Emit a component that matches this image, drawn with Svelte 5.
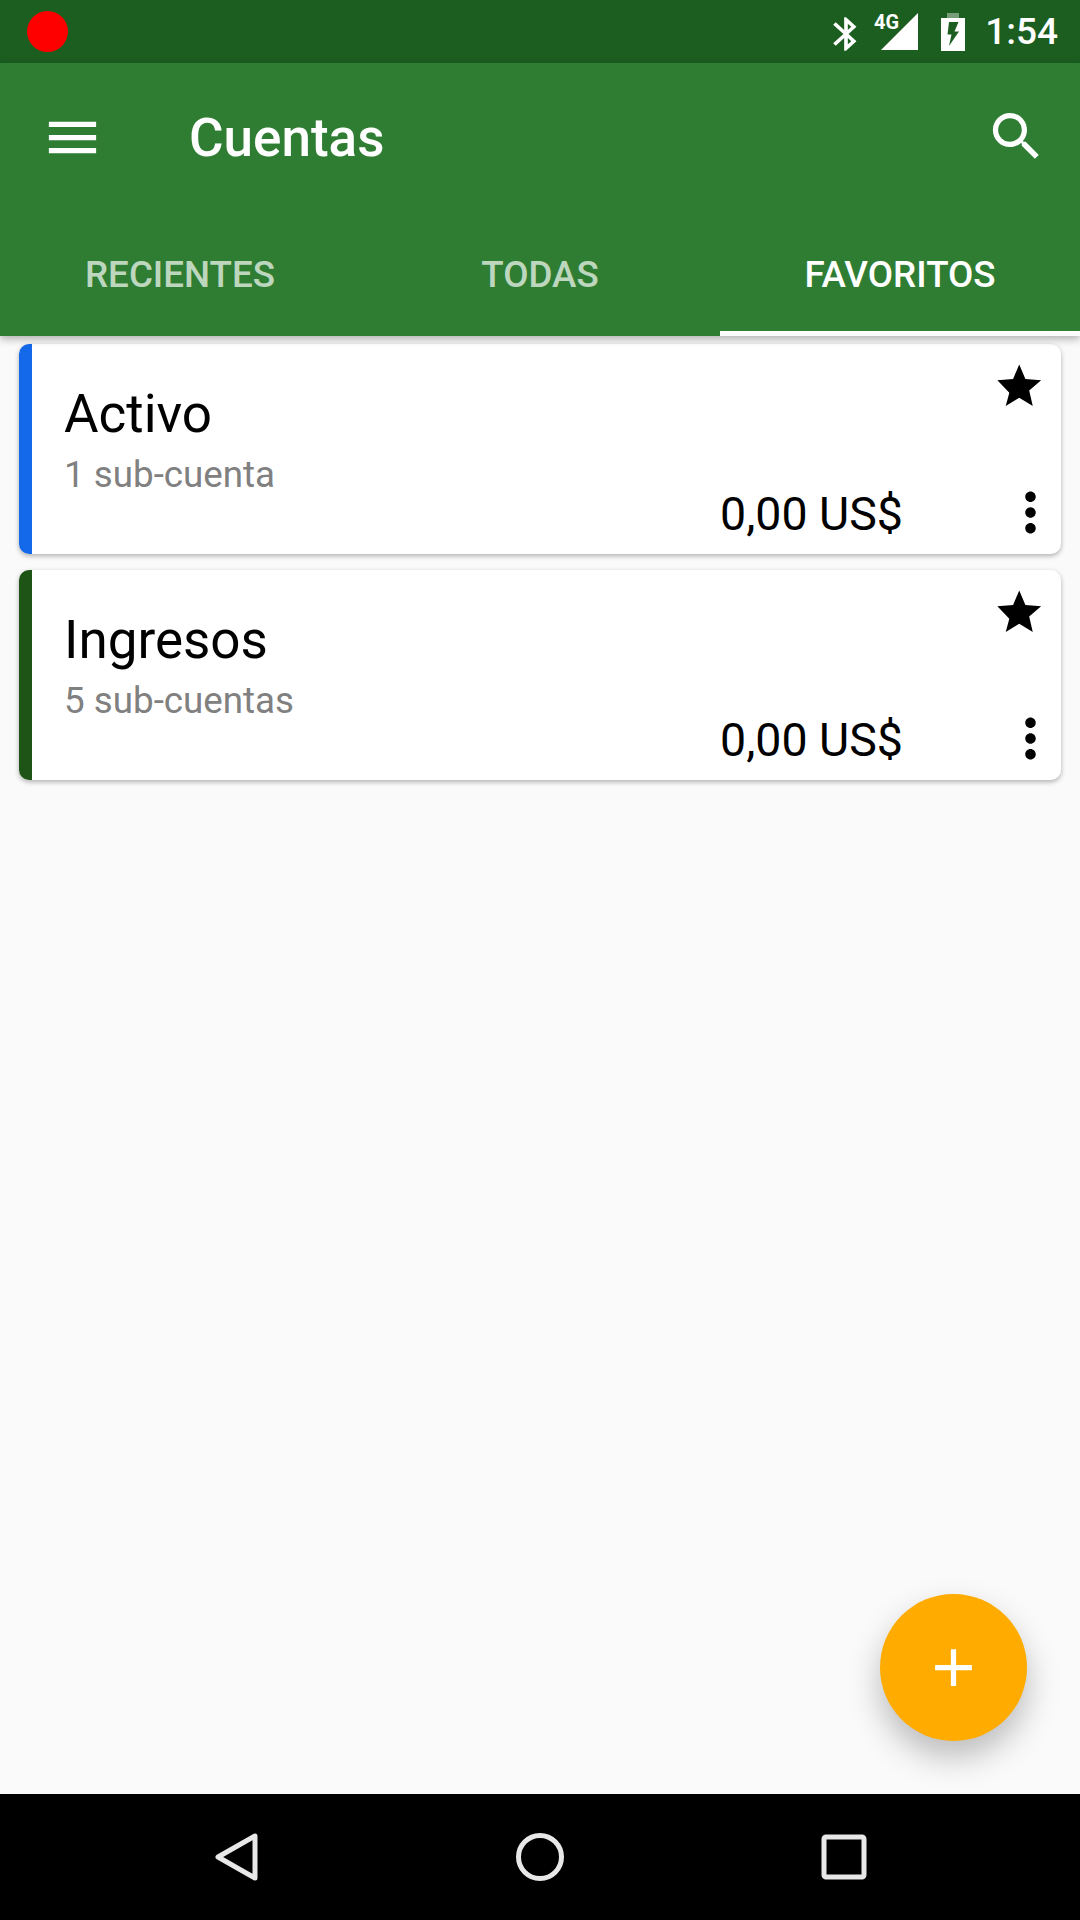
<script>
	const tabs = [
		{ label: 'RECIENTES', active: false },
		{ label: 'TODAS', active: false },
		{ label: 'FAVORITOS', active: true }
	];

	const accounts = [
		{ name: 'Activo', sub: '1 sub-cuenta', amount: '0,00 US$', color: 'blue' },
		{ name: 'Ingresos', sub: '5 sub-cuentas', amount: '0,00 US$', color: 'green' }
	];
</script>

<div class="screen">
	<div class="status">
		<span class="rec"></span>
		<div class="status-icons">
			<svg class="bt" viewBox="0 0 24 24" preserveAspectRatio="none">
				<path d="M17.71 7.71L12 2h-1v7.59L6.41 5 5 6.41 10.59 12 5 17.59 6.41 19 11 14.41V22h1l5.71-5.71-4.3-4.29 4.3-4.29zM13 5.83l1.88 1.88L13 9.59V5.83zm1.88 10.46L13 18.17v-3.76l1.88 1.88z" />
			</svg>
			<div class="signal">
				<span class="net">4G</span>
				<svg viewBox="0 0 37 37"><path d="M0 37L37 0v37z" /></svg>
			</div>
			<svg class="battery" viewBox="0 0 24 38">
				<path class="nub" d="M6 0h12v5H6z" />
				<path fill-rule="evenodd" d="M0 5h24v33H0zM8 9h9.500l-4 9.500h4.500L8 33l2.500-11.500H6.500z" />
			</svg>
			<span class="time">1:54</span>
		</div>
	</div>

	<header class="appbar">
		<div class="toolbar">
			<svg class="menu" viewBox="0 0 24 24"><path d="M3 18h18v-2H3v2zm0-5h18v-2H3v2zm0-7v2h18V6H3z" /></svg>
			<h1>Cuentas</h1>
			<svg class="search" viewBox="0 0 24 24">
				<path d="M15.5 14h-.79l-.28-.27C15.410 12.590 16 11.110 16 9.500 16 5.910 13.090 3 9.500 3S3 5.910 3 9.500 5.910 16 9.500 16c1.610 0 3.090-.59 4.230-1.570l.27.28v.79l5 4.990L20.490 19l-4.990-5zm-6 0C7.010 14 5 11.990 5 9.500S7.010 5 9.500 5 14 7.010 14 9.500 11.990 14 9.500 14z" />
			</svg>
		</div>
		<nav class="tabs">
			{#each tabs as tab}
				<div class="tab" class:active={tab.active}>{tab.label}</div>
			{/each}
		</nav>
	</header>

	<main>
		{#each accounts as account}
			<article class="card">
				<div class="stripe {account.color}"></div>
				<div class="info">
					<div class="name">{account.name}</div>
					<div class="sub">{account.sub}</div>
				</div>
				<div class="amount">{account.amount}</div>
				<div class="actions">
					<svg class="star" viewBox="0 0 24 24">
						<path d="M12 17.270L18.180 21l-1.640-7.030L22 9.240l-7.190-.61L12 2 9.190 8.630 2 9.240l5.460 5.730L5.820 21z" />
					</svg>
					<svg class="more" viewBox="0 0 24 24">
						<path d="M12 8c1.100 0 2-.9 2-2s-.9-2-2-2-2 .9-2 2 .9 2 2 2zm0 2c-1.100 0-2 .9-2 2s.9 2 2 2 2-.9 2-2-.9-2-2-2zm0 6c-1.100 0-2 .9-2 2s.9 2 2 2 2-.9 2-2-.9-2-2-2z" />
					</svg>
				</div>
			</article>
		{/each}

		<button class="fab" aria-label="Nueva cuenta">
			<svg viewBox="0 0 24 24"><path d="M19 13h-6v6h-2v-6H5v-2h6V5h2v6h6v2z" /></svg>
		</button>
	</main>

	<footer class="navbar">
		<svg viewBox="0 0 48 52"><path d="M42 5v42L5 26z" /></svg>
		<svg viewBox="0 0 48 52"><circle cx="24" cy="26" r="21.500" /></svg>
		<svg viewBox="0 0 48 52"><rect x="5" y="6" width="40" height="40" rx="2" /></svg>
	</footer>
</div>

<style>
	:global(body) {
		background: #fafafa;
	}

	.screen {
		display: flex;
		flex-direction: column;
		width: 1080px;
		height: 1920px;
		overflow: hidden;
		font-family: Roboto, sans-serif;
		background: #fafafa;
	}

	/* status bar */
	.status {
		display: flex;
		align-items: center;
		justify-content: space-between;
		flex: none;
		height: 63px;
		padding: 0 22px 0 27px;
		box-sizing: border-box;
		background: #1b5e20;
		color: #fff;
	}
	.rec {
		width: 41px;
		height: 41px;
		border-radius: 50%;
		background: #ff0000;
	}
	.status-icons {
		display: flex;
		align-items: center;
	}
	.status-icons svg {
		display: block;
		fill: #fff;
	}
	.bt {
		width: 44px;
		height: 40px;
		margin-top: 4px;
	}
	.signal {
		position: relative;
		width: 37px;
		height: 37px;
		margin-left: 13px;
	}
	.net {
		position: absolute;
		top: 0;
		left: -7px;
		font-size: 21px;
		line-height: 18px;
		font-weight: 700;
		transform: scaleX(0.95);
		transform-origin: left;
	}
	.battery {
		width: 24px;
		height: 38px;
		margin-left: 23px;
	}
	.nub {
		opacity: 0.4;
	}
	.time {
		margin-left: 20px;
		font-size: 37px;
		font-weight: 500;
		line-height: 40px;
	}

	/* app bar */
	.appbar {
		position: relative;
		z-index: 1;
		flex: none;
		background: #2e7d32;
		box-shadow: 0 3px 8px rgba(0, 0, 0, 0.3);
		color: #fff;
	}
	.toolbar {
		display: flex;
		align-items: center;
		height: 147px;
		padding: 0 32px 0 41px;
	}
	.toolbar svg {
		width: 63px;
		height: 63px;
		flex: none;
		fill: #fff;
	}
	.menu {
		margin-top: 1px;
	}
	h1 {
		flex: 1;
		margin: 2px 0 0 85px;
		font-size: 53px;
		font-weight: 500;
	}
	.tabs {
		display: flex;
		height: 126px;
	}
	.tab {
		flex: 1;
		box-sizing: border-box;
		padding-top: 41px;
		text-align: center;
		font-size: 36.75px;
		font-weight: 500;
		line-height: 48px;
		color: rgba(255, 255, 255, 0.7);
		border-bottom: 5px solid transparent;
	}
	.tab.active {
		color: #fff;
		border-bottom-color: #fff;
	}

	/* account list */
	main {
		position: relative;
		flex: 1;
		display: flex;
		flex-direction: column;
		gap: 16px;
		padding: 8px 19px;
	}
	.card {
		display: flex;
		height: 210px;
		flex: none;
		background: #fff;
		border-radius: 10px;
		overflow: hidden;
		box-shadow: 0 2px 5px rgba(0, 0, 0, 0.3);
	}
	.stripe {
		width: 13px;
		flex: none;
	}
	.stripe.blue {
		background: #1469eb;
	}
	.stripe.green {
		background: #1e5416;
	}
	.info {
		flex: 1;
		padding: 39px 0 0 32px;
	}
	.name {
		font-size: 53px;
		line-height: 62px;
		color: #000;
	}
	.sub {
		margin-top: 8px;
		font-size: 36.75px;
		line-height: 44px;
		color: #808080;
	}
	.amount {
		align-self: flex-end;
		margin: 0 90px 12px 0;
		font-size: 46.5px;
		line-height: 56px;
		color: #000;
	}
	.actions {
		display: flex;
		flex-direction: column;
		justify-content: space-between;
		flex: none;
		width: 68px;
		padding: 16px 0 10px;
		box-sizing: border-box;
	}
	.star {
		width: 52.5px;
		height: 52.5px;
	}
	.more {
		width: 63px;
		height: 63px;
		margin-right: -0.5px;
		align-self: flex-end;
	}

	.fab {
		position: absolute;
		right: 53px;
		bottom: 53px;
		display: flex;
		align-items: center;
		justify-content: center;
		width: 147px;
		height: 147px;
		padding: 0;
		border: none;
		border-radius: 50%;
		background: #ffab00;
		box-shadow: 0 16px 32px rgba(0, 0, 0, 0.25);
	}
	.fab svg {
		width: 63px;
		height: 63px;
		fill: #fff;
	}

	/* nav bar */
	.navbar {
		display: flex;
		justify-content: center;
		align-items: center;
		gap: 255px;
		flex: none;
		height: 126px;
		background: #000;
	}
	.navbar svg {
		width: 48px;
		height: 52px;
		fill: none;
		stroke: #e8e8e8;
		stroke-width: 5px;
		stroke-linejoin: round;
	}
</style>
